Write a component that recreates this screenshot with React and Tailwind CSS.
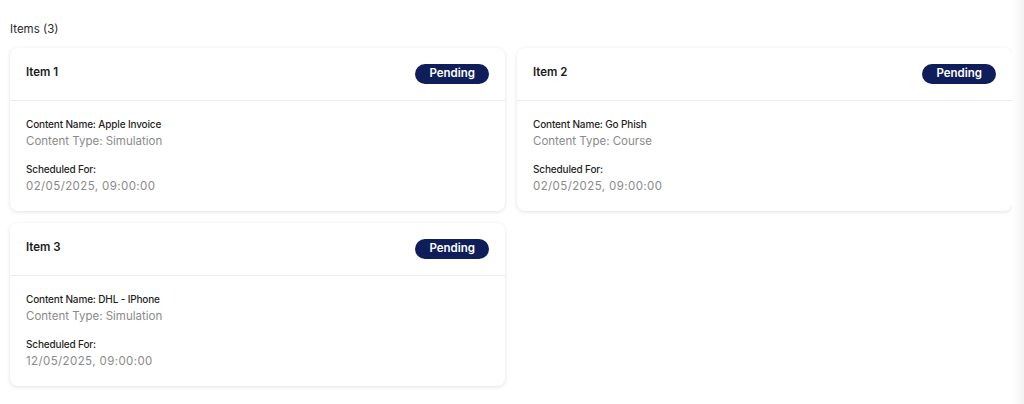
import React from 'react';

const items = [
  { title: 'Item 1', name: 'Apple Invoice', type: 'Simulation', date: '02/05/2025, 09:00:00' },
  { title: 'Item 2', name: 'Go Phish', type: 'Course', date: '02/05/2025, 09:00:00' },
  { title: 'Item 3', name: 'DHL - IPhone', type: 'Simulation', date: '12/05/2025, 09:00:00' },
];

function ItemCard({ item }) {
  return (
    <div className="bg-white rounded-lg shadow-[0_1px_4px_rgba(0,0,0,0.12)]">
      <div className="flex items-center justify-between px-4 py-4 border-b border-[#ececec]">
        <span className="text-[11.5px] font-semibold text-[#1a1a1a] -mt-[2px]">{item.title}</span>
        <span className="h-[20px] px-[14px] rounded-full bg-[#0f1d5a] text-white text-[11.5px] font-semibold flex items-center">
          Pending
        </span>
      </div>
      <div className="px-4 pt-4 pb-[17px]">
        <div className="text-[10px] leading-[14px] font-medium tracking-[-0.15px] text-[#1f1f1f]">Content Name: {item.name}</div>
        <div className="text-[11.5px] leading-[16px] mt-[2px] text-[#8a8a8a]">Content Type: {item.type}</div>
        <div className="text-[10px] leading-[14px] font-medium tracking-[-0.15px] text-[#1f1f1f] mt-[13px]">Scheduled For:</div>
        <div className="text-[11.5px] leading-[16px] mt-[2px] tracking-[0.4px] text-[#8a8a8a]">{item.date}</div>
      </div>
    </div>
  );
}

export default function App() {
  return (
    <div className="flex w-[1024px] h-[404px] bg-white font-['Inter',sans-serif] overflow-hidden">
      <div className="flex-1 pl-[10px] pr-0 pt-[22px]">
        <div className="text-[11.5px] leading-[14px] text-[#2a2a2a]">Items (3)</div>
        <div className="grid grid-cols-2 gap-x-[12px] gap-y-[12px] mt-[12px]">
          {items.map((item) => (
            <ItemCard key={item.title} item={item} />
          ))}
        </div>
      </div>
      <div className="w-[12px] bg-gradient-to-r from-white to-[#f3f3f3]" />
    </div>
  );
}
